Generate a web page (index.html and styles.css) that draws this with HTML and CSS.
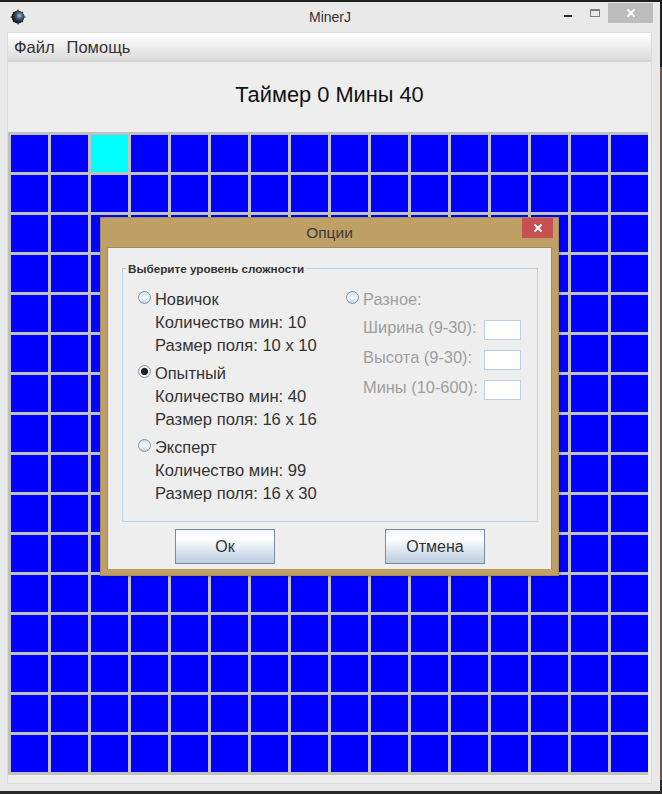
FILE: index.html
```html
<!DOCTYPE html>
<html lang="ru">
<head>
<meta charset="utf-8">
<title>MinerJ</title>
<link rel="stylesheet" href="styles.css">
</head>
<body>
<div class="desktop">
<div class="window">
  <header class="titlebar">
    <svg class="app-icon" width="18" height="18" viewBox="0 0 18 18">
      <defs><radialGradient id="mine" cx="0.62" cy="0.4" r="0.62"><stop offset="0" stop-color="#a9c6da"/><stop offset="0.35" stop-color="#4a6a82"/><stop offset="0.75" stop-color="#1f2a35"/><stop offset="1" stop-color="#14181e"/></radialGradient></defs>
      <path d="M9 1.5v15M1.5 9h15M4 4l10 10M14 4L4 14" stroke="#20262d" stroke-width="1.2"/>
      <circle cx="9" cy="9" r="6.4" fill="url(#mine)"/>
    </svg>
    <span class="title">MinerJ</span>
    <div class="controls">
      <span class="ctl-min"></span>
      <span class="ctl-max"></span>
      <span class="ctl-close"><svg width="10" height="10" viewBox="0 0 10 10"><path d="M1.5 1.5l7 7M8.5 1.5l-7 7" stroke="#fff" stroke-width="2"/></svg></span>
    </div>
  </header>
  <div class="client">
    <nav class="menubar"><span>Файл</span><span>Помощь</span></nav>
    <div class="status">Таймер 0 Мины 40</div>
    <div class="board">
      <span class="cell"></span><span class="cell"></span><span class="cell active"></span><span class="cell"></span><span class="cell"></span><span class="cell"></span><span class="cell"></span><span class="cell"></span><span class="cell"></span><span class="cell"></span><span class="cell"></span><span class="cell"></span><span class="cell"></span><span class="cell"></span><span class="cell"></span><span class="cell"></span>
      <span class="cell"></span><span class="cell"></span><span class="cell"></span><span class="cell"></span><span class="cell"></span><span class="cell"></span><span class="cell"></span><span class="cell"></span><span class="cell"></span><span class="cell"></span><span class="cell"></span><span class="cell"></span><span class="cell"></span><span class="cell"></span><span class="cell"></span><span class="cell"></span>
      <span class="cell"></span><span class="cell"></span><span class="cell"></span><span class="cell"></span><span class="cell"></span><span class="cell"></span><span class="cell"></span><span class="cell"></span><span class="cell"></span><span class="cell"></span><span class="cell"></span><span class="cell"></span><span class="cell"></span><span class="cell"></span><span class="cell"></span><span class="cell"></span>
      <span class="cell"></span><span class="cell"></span><span class="cell"></span><span class="cell"></span><span class="cell"></span><span class="cell"></span><span class="cell"></span><span class="cell"></span><span class="cell"></span><span class="cell"></span><span class="cell"></span><span class="cell"></span><span class="cell"></span><span class="cell"></span><span class="cell"></span><span class="cell"></span>
      <span class="cell"></span><span class="cell"></span><span class="cell"></span><span class="cell"></span><span class="cell"></span><span class="cell"></span><span class="cell"></span><span class="cell"></span><span class="cell"></span><span class="cell"></span><span class="cell"></span><span class="cell"></span><span class="cell"></span><span class="cell"></span><span class="cell"></span><span class="cell"></span>
      <span class="cell"></span><span class="cell"></span><span class="cell"></span><span class="cell"></span><span class="cell"></span><span class="cell"></span><span class="cell"></span><span class="cell"></span><span class="cell"></span><span class="cell"></span><span class="cell"></span><span class="cell"></span><span class="cell"></span><span class="cell"></span><span class="cell"></span><span class="cell"></span>
      <span class="cell"></span><span class="cell"></span><span class="cell"></span><span class="cell"></span><span class="cell"></span><span class="cell"></span><span class="cell"></span><span class="cell"></span><span class="cell"></span><span class="cell"></span><span class="cell"></span><span class="cell"></span><span class="cell"></span><span class="cell"></span><span class="cell"></span><span class="cell"></span>
      <span class="cell"></span><span class="cell"></span><span class="cell"></span><span class="cell"></span><span class="cell"></span><span class="cell"></span><span class="cell"></span><span class="cell"></span><span class="cell"></span><span class="cell"></span><span class="cell"></span><span class="cell"></span><span class="cell"></span><span class="cell"></span><span class="cell"></span><span class="cell"></span>
      <span class="cell"></span><span class="cell"></span><span class="cell"></span><span class="cell"></span><span class="cell"></span><span class="cell"></span><span class="cell"></span><span class="cell"></span><span class="cell"></span><span class="cell"></span><span class="cell"></span><span class="cell"></span><span class="cell"></span><span class="cell"></span><span class="cell"></span><span class="cell"></span>
      <span class="cell"></span><span class="cell"></span><span class="cell"></span><span class="cell"></span><span class="cell"></span><span class="cell"></span><span class="cell"></span><span class="cell"></span><span class="cell"></span><span class="cell"></span><span class="cell"></span><span class="cell"></span><span class="cell"></span><span class="cell"></span><span class="cell"></span><span class="cell"></span>
      <span class="cell"></span><span class="cell"></span><span class="cell"></span><span class="cell"></span><span class="cell"></span><span class="cell"></span><span class="cell"></span><span class="cell"></span><span class="cell"></span><span class="cell"></span><span class="cell"></span><span class="cell"></span><span class="cell"></span><span class="cell"></span><span class="cell"></span><span class="cell"></span>
      <span class="cell"></span><span class="cell"></span><span class="cell"></span><span class="cell"></span><span class="cell"></span><span class="cell"></span><span class="cell"></span><span class="cell"></span><span class="cell"></span><span class="cell"></span><span class="cell"></span><span class="cell"></span><span class="cell"></span><span class="cell"></span><span class="cell"></span><span class="cell"></span>
      <span class="cell"></span><span class="cell"></span><span class="cell"></span><span class="cell"></span><span class="cell"></span><span class="cell"></span><span class="cell"></span><span class="cell"></span><span class="cell"></span><span class="cell"></span><span class="cell"></span><span class="cell"></span><span class="cell"></span><span class="cell"></span><span class="cell"></span><span class="cell"></span>
      <span class="cell"></span><span class="cell"></span><span class="cell"></span><span class="cell"></span><span class="cell"></span><span class="cell"></span><span class="cell"></span><span class="cell"></span><span class="cell"></span><span class="cell"></span><span class="cell"></span><span class="cell"></span><span class="cell"></span><span class="cell"></span><span class="cell"></span><span class="cell"></span>
      <span class="cell"></span><span class="cell"></span><span class="cell"></span><span class="cell"></span><span class="cell"></span><span class="cell"></span><span class="cell"></span><span class="cell"></span><span class="cell"></span><span class="cell"></span><span class="cell"></span><span class="cell"></span><span class="cell"></span><span class="cell"></span><span class="cell"></span><span class="cell"></span>
      <span class="cell"></span><span class="cell"></span><span class="cell"></span><span class="cell"></span><span class="cell"></span><span class="cell"></span><span class="cell"></span><span class="cell"></span><span class="cell"></span><span class="cell"></span><span class="cell"></span><span class="cell"></span><span class="cell"></span><span class="cell"></span><span class="cell"></span><span class="cell"></span>
    </div>
  </div>
</div>

<section class="dialog">
  <header class="dlg-title">
    <span>Опции</span>
    <span class="dlg-close"><svg width="10" height="10" viewBox="0 0 10 10"><path d="M1.5 1.5l7 7M8.5 1.5l-7 7" stroke="#fff" stroke-width="2"/></svg></span>
  </header>
  <div class="dlg-body">
    <fieldset class="group">
      <legend>Выберите уровень сложности</legend>
      <div class="levels">
        <div class="level">
          <div class="radio-row"><span class="radio"></span>Новичок</div>
          <div class="info">Количество мин: 10</div>
          <div class="info">Размер поля: 10 x 10</div>
        </div>
        <div class="level">
          <div class="radio-row"><span class="radio checked"></span>Опытный</div>
          <div class="info">Количество мин: 40</div>
          <div class="info">Размер поля: 16 x 16</div>
        </div>
        <div class="level">
          <div class="radio-row"><span class="radio"></span>Эксперт</div>
          <div class="info">Количество мин: 99</div>
          <div class="info">Размер поля: 16 x 30</div>
        </div>
      </div>
      <div class="custom">
        <div class="radio-row"><span class="radio"></span>Разное:</div>
        <div class="fields">
          <div class="field"><span class="field-label">Ширина (9-30):</span><span class="input"></span></div>
          <div class="field"><span class="field-label">Высота (9-30):</span><span class="input"></span></div>
          <div class="field"><span class="field-label">Мины (10-600):</span><span class="input"></span></div>
        </div>
      </div>
    </fieldset>
    <div class="actions">
      <button class="btn">Ок</button>
      <button class="btn">Отмена</button>
    </div>
  </div>
</section>
</div>
</body>
</html>
```

FILE: styles.css
```css
* { box-sizing: border-box; }
html, body { margin: 0; padding: 0; }
body { font-family: "Liberation Sans", Arial, sans-serif; color: #222; }

.desktop {
  position: relative;
  width: 662px;
  height: 794px;
  overflow: hidden;
  background: linear-gradient(#1f1f1f 0 67px, #6b5548 67px 780px, #2a2a2a 780px);
}

.window {
  width: 660px;
  height: 789px;
  margin-top: 2px;
  padding: 0 8px 7px 7px;
  background: #e9e9e9;
  display: flex;
  flex-direction: column;
}

.titlebar {
  position: relative;
  height: 30px;
  flex: none;
  display: flex;
  align-items: center;
  justify-content: center;
  font-size: 14px;
  color: #333;
}
.app-icon { position: absolute; left: 2px; top: 6px; }
.title { margin-left: 1px; margin-top: -1px; }

.controls {
  position: absolute;
  right: -1px;
  top: 1px;
  display: flex;
  align-items: flex-start;
}
.ctl-min { width: 8px; height: 2px; margin: 12px 18px 0 0; background: #2b2b2b; }
.ctl-max { width: 10px; height: 8px; margin: 6px 8px 0 0; border: 1px solid #7f7f7f; border-top-width: 2px; }
.ctl-close { width: 45px; height: 20px; background: #bcbcbc; display: flex; align-items: center; justify-content: center; }

.client {
  flex: 1;
  border: 1px solid #dcdcdc;
  background: #eeeeee;
  display: flex;
  flex-direction: column;
}

.menubar {
  height: 29px;
  flex: none;
  display: flex;
  gap: 12px;
  align-items: center;
  padding: 1px 0 0 6px;
  font-size: 16.5px;
  color: #333;
  background: linear-gradient(#ffffff, #dcdcdc);
  border-bottom: 2px solid #d4d4d4;
}

.status {
  height: 70px;
  flex: none;
  padding-bottom: 4px;
  display: flex;
  align-items: center;
  justify-content: center;
  font-size: 21.8px;
  color: #111;
}

.board {
  width: 640px;
  padding: 3px;
  display: grid;
  grid-template-columns: repeat(16, 37px);
  grid-auto-rows: 37px;
  gap: 3px;
  background: #c0c0c0;
}
.cell { background: #0000ff; }
.cell.active { background: #00ffff; }

.dialog {
  position: absolute;
  left: 100px;
  top: 217px;
  width: 459px;
  height: 359px;
  background: #bfa064;
  border: 1px solid #a08a5c;
  box-shadow: 1px 1px 2px rgba(0,0,0,.25);
  display: flex;
  flex-direction: column;
  padding: 0 6px 6px 6px;
}
.dlg-title {
  position: relative;
  height: 29px;
  flex: none;
  display: flex;
  align-items: center;
  justify-content: center;
  font-size: 15.5px;
  color: #3a3a3a;
  padding-top: 1px;
}
.dlg-close {
  position: absolute;
  right: -1px;
  top: 0;
  width: 31px;
  height: 20px;
  background: #c75050;
  display: flex;
  align-items: center;
  justify-content: center;
}
.dlg-body {
  flex: 1;
  background: #eeeeee;
  border: 1px solid #a08a5c;
  border-width: 1px 1px 0 1px;
  padding: 14px 13px 0 14px;
  display: flex;
  flex-direction: column;
}

.group {
  height: 260px;
  flex: none;
  margin: 0;
  padding: 0 0 0 15px;
  border: 1px solid #b8cfe5;
  display: flex;
  gap: 18px;
}
.group legend {
  padding: 0 2px;
  margin-left: -12px;
  font-size: 11.7px;
  font-weight: bold;
  color: #333;
  line-height: 13px;
}

.levels { display: flex; flex-direction: column; gap: 5px; padding-top: 13px; width: 190px; }
.level { display: flex; flex-direction: column; }
.radio-row {
  display: flex;
  align-items: center;
  gap: 4px;
  height: 23px;
  font-size: 16.4px;
  color: #333;
}
.info { height: 23px; line-height: 23px; padding-left: 17px; font-size: 16.6px; color: #333; }

.radio {
  width: 13px;
  height: 13px;
  border-radius: 50%;
  border: 1.5px solid #7e95ad;
  background: linear-gradient(#cfdcea, #f6f9fc 50%, #c0d0e2);
  margin-top: -4px;
  flex: none;
}
.radio.checked { background: radial-gradient(circle, #222 0 3.2px, #eef2f7 4px); }

.custom { padding-top: 13px; font-size: 16.4px; }
.custom .radio-row, .field-label { color: #9e9e9e; }
.fields { padding-top: 4px; }
.field {
  display: flex;
  align-items: center;
  justify-content: space-between;
  width: 158px;
  height: 30px;
  margin-left: 17px;
}
.field-label { padding-bottom: 5px; }
.input { width: 37px; height: 20px; background: #fff; border: 1px solid #b8cfe5; }

.actions {
  display: flex;
  justify-content: flex-start;
  gap: 110px;
  padding: 7px 0 0 53px;
}
.btn {
  width: 100px;
  height: 35px;
  padding: 0;
  font: 16px "Liberation Sans", Arial, sans-serif;
  color: #333;
  border: 1px solid #7c8b9c;
  background: linear-gradient(#f0f4f8, #ffffff 25%, #dfe8f1 60%, #b9cde0);
}
```
